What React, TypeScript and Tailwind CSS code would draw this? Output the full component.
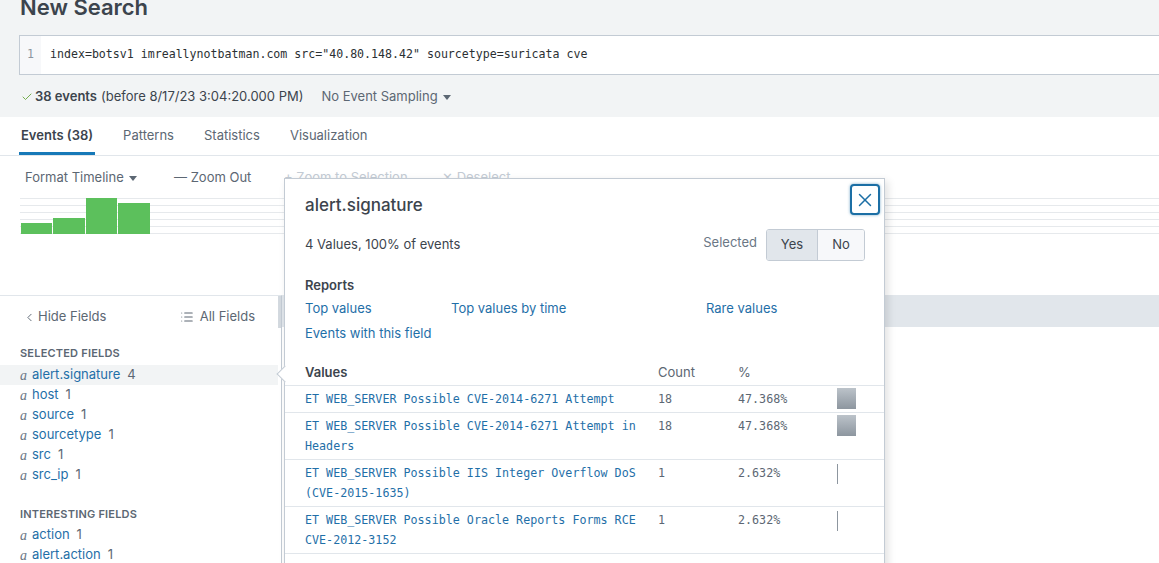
import clsx from "clsx";
import { Check, ChevronLeft, List, X } from "lucide-react";

const tabs = [
  { label: "Events (38)", active: true },
  { label: "Patterns" },
  { label: "Statistics" },
  { label: "Visualization" },
];

const selectedFields = [
  { name: "alert.signature", count: 4, active: true },
  { name: "host", count: 1 },
  { name: "source", count: 1 },
  { name: "sourcetype", count: 1 },
  { name: "src", count: 1 },
  { name: "src_ip", count: 1 },
];

const interestingFields = [
  { name: "action", count: 1 },
  { name: "alert.action", count: 1 },
];

const values = [
  { label: "ET WEB_SERVER Possible CVE-2014-6271 Attempt", count: 18, pct: "47.368%", big: true },
  { label: "ET WEB_SERVER Possible CVE-2014-6271 Attempt in Headers", count: 18, pct: "47.368%", big: true },
  { label: "ET WEB_SERVER Possible IIS Integer Overflow DoS (CVE-2015-1635)", count: 1, pct: "2.632%" },
  { label: "ET WEB_SERVER Possible Oracle Reports Forms RCE CVE-2012-3152", count: 1, pct: "2.632%" },
];

function Caret() {
  return (
    <svg width="8" height="5" viewBox="0 0 8 5" className="ml-[5px] inline-block">
      <path d="M0 0h8L4 5z" fill="currentColor" />
    </svg>
  );
}

function FieldRow({ name, count, active }: { name: string; count: number; active?: boolean }) {
  return (
    <div className={clsx("flex h-[20px] items-center pl-[20px]", active && "bg-[#f2f4f5]")}>
      <span className="w-[12px] font-['Liberation_Serif',serif] text-[14px] italic text-[#6b7785]">a</span>
      <span className="text-[#1f6fa8]">{name}</span>
      <span className="ml-[7px] text-[#5c6773]">{count}</span>
    </div>
  );
}

export default function App() {
  return (
    <div className="relative h-[563px] w-[1159px] overflow-hidden bg-white font-['Inter',sans-serif] text-[13px] text-[#3c444d]">
      {/* search header */}
      <div className="flow-root h-[117px] bg-[#f2f4f5] pl-[19px]">
        <h1 className="-mt-[7px] pl-px text-[22px] font-semibold leading-[28px] text-[#3c444d]">New Search</h1>
        <div className="mt-[14px] flex h-[40px] border border-r-0 border-[#c3cbd4] bg-white">
          <div className="flex w-[21px] items-center justify-center bg-[#f7f8fa] font-['DejaVu_Sans_Mono',monospace] text-[11.6px] text-[#8c959f]">
            1
          </div>
          <div className="flex items-center pl-[9px] font-['DejaVu_Sans_Mono',monospace] text-[11.6px] text-[#2b3033]">
            index=botsv1 imreallynotbatman.com src="40.80.148.42" sourcetype=suricata cve
          </div>
        </div>
        <div className="mt-[12px] flex h-[20px] items-center">
          <Check size={12} strokeWidth={1.75} className="ml-[2px] text-[#65a637]" />
          <span className="ml-[2px] font-semibold">38 events</span>
          <span className="ml-[4px]">(before 8/17/23 3:04:20.000 PM)</span>
          <span className="ml-[18px] flex items-center text-[#5c6773]">
            No Event Sampling
            <Caret />
          </span>
        </div>
      </div>

      {/* tabs */}
      <div className="flex h-[39px] gap-[26px] border-b border-[#e1e6eb] pl-[19px]">
        {tabs.map((t) => (
          <div
            key={t.label}
            className={clsx(
              "flex h-[38px] items-center border-b-[3px] px-[2px] pt-[3px]",
              t.active ? "border-[#1779b8] font-semibold text-[#3c444d]" : "border-transparent text-[#5c6773]"
            )}
          >
            {t.label}
          </div>
        ))}
      </div>

      {/* timeline toolbar */}
      <div className="mt-[10px] flex h-[22px] items-center pl-[25px] pt-[2px] text-[#5c6773]">
        <div className="flex w-[149px] items-center">
          Format Timeline
          <Caret />
        </div>
        <div className="w-[110px]">— Zoom Out</div>
        <div className="w-[158px] text-[#c3cbd4]">+ Zoom to Selection</div>
        <div className="text-[#c3cbd4]">✕ Deselect</div>
      </div>

      <svg width="1139" height="36" className="ml-[20px] mt-[10px] block">
        {[0.5, 7.5, 14.5, 21.5, 28.5, 35.5].map((y) => (
          <line key={y} x1="0" x2="1139" y1={y} y2={y} stroke="#e6e9ec" strokeWidth="1" />
        ))}
        <rect x="1" y="25" width="31" height="11" fill="#5cc05c" />
        <rect x="33" y="20" width="32" height="16" fill="#5cc05c" />
        <rect x="66" y="0" width="31" height="36" fill="#5cc05c" />
        <rect x="98" y="5" width="32" height="31" fill="#5cc05c" />
      </svg>

      {/* fields + events */}
      <div className="mt-[61px] flex h-[268px]">
        <div className="flex w-[282px] border-r border-t border-r-[#c3cbd4] border-t-[#e1e6eb]">
          <div className="flex-1">
            <div className="mt-[11px] flex h-[20px] items-center justify-between pl-[23px] pr-[23px] text-[#5c6773]">
              <span className="flex items-center">
                <ChevronLeft size={13} strokeWidth={1.75} className="mr-[2px]" />
                Hide Fields
              </span>
              <span className="flex items-center">
                <List size={14} strokeWidth={1.75} className="mr-[6px]" />
                All Fields
              </span>
            </div>
            <div className="mt-[16px] flex h-[20px] items-center pl-[20px] text-[11px] font-semibold uppercase tracking-[0.2px] text-[#5c6773]">
              Selected Fields
            </div>
            <div className="mt-[2px]">
              {selectedFields.map((f) => (
                <FieldRow key={f.name} {...f} />
              ))}
            </div>
            <div className="mt-[19px] flex h-[20px] items-center pl-[20px] text-[11px] font-semibold uppercase tracking-[0.2px] text-[#5c6773]">
              Interesting Fields
            </div>
            <div className="mt-px">
              {interestingFields.map((f) => (
                <FieldRow key={f.name} {...f} />
              ))}
            </div>
          </div>
          <div className="w-[3px]">
            <div className="h-[32px] bg-[#d3d9df]" />
          </div>
        </div>
        <div className="flex-1">
          <div className="h-[32px] bg-[#e1e6eb]" />
        </div>
      </div>

      {/* field popover */}
      <div className="absolute left-[284px] top-[178px] h-[420px] w-[601px] border border-[#c3cbd4] bg-white shadow-[3px_3px_8px_rgba(0,0,0,0.12)]">
        <div className="absolute left-[-6px] top-[189px] h-[12px] w-[12px] rotate-45 border-b border-l border-[#c3cbd4] bg-white" />
        <button className="absolute right-[4px] top-[5px] flex h-[31px] w-[30px] items-center justify-center rounded-[4px] border-2 border-[#1c6fa5] bg-white text-[#1c6fa5] shadow-[0_0_3px_rgba(28,111,165,0.6)]">
          <X size={22} strokeWidth={1.6} />
        </button>
        <div className="px-[20px] pt-[14px]">
          <div className="text-[17px] font-medium leading-[24px]">alert.signature</div>
          <div className="-mr-px mt-[12px] flex h-[32px] items-center justify-between">
            <span>4 Values, 100% of events</span>
            <div className="flex items-center">
              <span className="mb-[4px] mr-[9px] text-[#6b7785]">Selected</span>
              <div className="flex h-[32px] overflow-hidden rounded-[3px] border border-[#c3cbd4]">
                <div className="flex w-[50px] items-center justify-center bg-[#e1e6eb]">Yes</div>
                <div className="flex w-[47px] items-center justify-center border-l border-[#c3cbd4] bg-[#f7f8fa]">No</div>
              </div>
            </div>
          </div>
          <div className="mt-[14px] font-semibold leading-[20px]">Reports</div>
          <div className="mt-[3px] grid grid-cols-[146px_255px_auto] gap-y-[5px] leading-[20px] text-[#1f6fa8]">
            <span>Top values</span>
            <span>Top values by time</span>
            <span>Rare values</span>
            <span>Events with this field</span>
          </div>
        </div>

        <div className="mt-[19px]">
          <div className="flex border-b border-[#e1e6eb] pb-[3px] pl-[20px] leading-[20px]">
            <div className="w-[353px] font-semibold">Values</div>
            <div className="w-[80px] text-[#5c6773]">Count</div>
            <div className="text-[#5c6773]">%</div>
          </div>
          {values.map((v) => (
            <div key={v.label} className="flex border-b border-[#e1e6eb] py-[3px] pl-[20px] leading-[20px]">
              <div className="w-[353px] pr-[12px] font-['DejaVu_Sans_Mono',monospace] text-[11.7px] text-[#1f6fa8]">{v.label}</div>
              <div className="w-[80px] font-['DejaVu_Sans_Mono',monospace] text-[11.7px] text-[#5c6773]">{v.count}</div>
              <div className="w-[99px] font-['DejaVu_Sans_Mono',monospace] text-[11.7px] text-[#5c6773]">{v.pct}</div>
              <div className="h-[20px]">
                {v.big ? (
                  <div className="-mt-[1px] h-[21px] w-[19px] bg-gradient-to-b from-[#bcc3ca] to-[#8d969f]" />
                ) : (
                  <div className="mt-[1px] h-[20px] w-px bg-[#8d969f]" />
                )}
              </div>
            </div>
          ))}
        </div>
      </div>
    </div>
  );
}
